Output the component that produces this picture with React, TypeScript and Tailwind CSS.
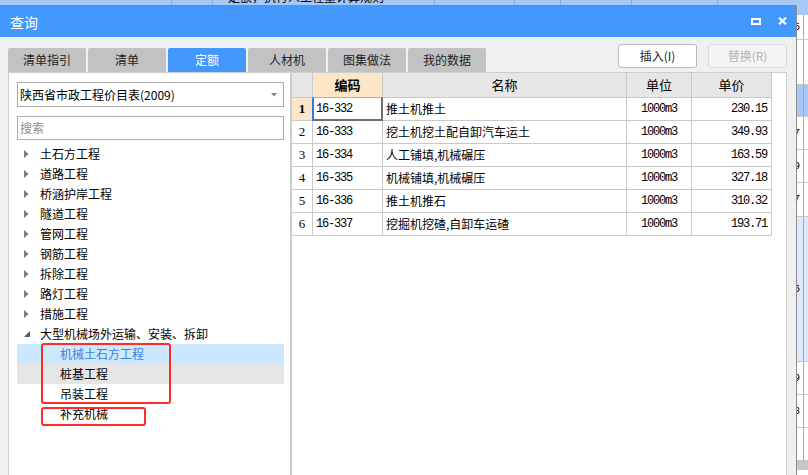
import React from "react";

type BgRowProps = { h: string; bg: string; digit?: string; line?: boolean };

function BgRow({ h, bg, digit, line = true }: BgRowProps) {
  return (
    <div className={`flex shrink-0 ${h} ${bg} ${line ? "border-b border-[#c8c8c8]" : ""}`}>
      <div className="w-[790px] shrink-0" />
      <div className="w-[14px] shrink-0 border-r border-[#a8a8a8] flex items-center justify-end pr-[3px] whitespace-nowrap">
        {digit}
      </div>
      <div className="flex-1" />
    </div>
  );
}

const topItems = [
  "土石方工程",
  "道路工程",
  "桥涵护岸工程",
  "隧道工程",
  "管网工程",
  "钢筋工程",
  "拆除工程",
  "路灯工程",
  "措施工程",
];

const rows = [
  { code: "16-332", name: "推土机推土", unit: "1000m3", price: "230.15" },
  { code: "16-333", name: "挖土机挖土配自卸汽车运土", unit: "1000m3", price: "349.93" },
  { code: "16-334", name: "人工铺填,机械碾压", unit: "1000m3", price: "163.59" },
  { code: "16-335", name: "机械铺填,机械碾压", unit: "1000m3", price: "327.18" },
  { code: "16-336", name: "推土机推石", unit: "1000m3", price: "310.32" },
  { code: "16-337", name: "挖掘机挖碴,自卸车运碴", unit: "1000m3", price: "193.71" },
];

const tabs = ["清单指引", "清单", "定额", "人材机", "图集做法", "我的数据"];

function Collapsed() {
  return (
    <svg width="5" height="8" viewBox="0 0 5 8">
      <polygon points="0,0 4.5,4 0,8" fill="#7d7d7d" />
    </svg>
  );
}

function Expanded() {
  return (
    <svg width="6" height="6" viewBox="0 0 6 6">
      <polygon points="6,0 6,6 0,6" fill="#595959" />
    </svg>
  );
}

export default function App() {
  return (
    <div className="relative w-[808px] h-[475px] overflow-hidden bg-white">
      {/* background application under the dialog */}
      <div className="absolute inset-0 flex flex-col font-['Liberation_Mono',monospace] text-[11px] text-black">
        <div className="h-[15px] shrink-0 bg-[#a6c8f7] flex overflow-hidden">
          <div className="w-[172px] shrink-0 border-r border-[#8aaee0]" />
          <div className="w-[41px] shrink-0 border-r border-[#8aaee0]" />
          <div className="w-[222px] shrink-0 border-r border-[#8aaee0] pl-[15px] whitespace-nowrap font-['Noto_Sans_CJK_SC',sans-serif] text-[12px] leading-[14px] -mt-[10px]">
            定额，执行人工程量计算规则
          </div>
          <div className="w-[80px] shrink-0 border-r border-[#8aaee0]" />
          <div className="w-[46px] shrink-0 border-r border-[#8aaee0]" />
          <div className="w-[71px] shrink-0 border-r border-[#8aaee0]" />
          <div className="w-[86px] shrink-0 border-r border-[#8aaee0] pl-[3px] whitespace-nowrap leading-[14px] -mt-[10px]">
            1.88*16.6+
          </div>
          <div className="flex-1" />
        </div>
        <BgRow h="h-[25px]" bg="bg-white" digit="5" />
        <BgRow h="h-[45px]" bg="bg-white" />
        <BgRow h="h-[32px]" bg="bg-[#a6c8f7]" />
        <BgRow h="h-[33px]" bg="bg-white" digit="7" />
        <BgRow h="h-[33px]" bg="bg-white" digit="9" />
        <BgRow h="h-[34px]" bg="bg-white" digit="7" />
        <BgRow h="h-[145px]" bg="bg-[#dce9fb]" digit="6" />
        <BgRow h="h-[33px]" bg="bg-white" digit="9" />
        <BgRow h="h-[33px]" bg="bg-white" digit="8" />
        <BgRow h="h-[32px]" bg="bg-white" line={false} />
        <div className="h-[10px] shrink-0 bg-[#c6c6c6]" />
        <div className="flex-1 bg-white" />
      </div>

      {/* dialog window */}
      <div className="absolute left-0 top-[5px] w-[797px] h-[480px] flex flex-col bg-[#f0f0f0] border-r border-[#8e8e8e] font-['Noto_Sans_CJK_SC',sans-serif] text-[12px] text-black">
        {/* title bar */}
        <div className="h-[32px] shrink-0 bg-[#4398fd] flex items-center pl-[10px] pr-[9px] text-white">
          <span className="text-[14px] leading-none mt-[2px]">查询</span>
          <div className="ml-auto flex items-center gap-[17px]">
            <div className="w-[10px] h-[7px] border-2 border-white" />
            <svg width="9" height="8" viewBox="0 0 9 8">
              <path d="M1 0.8 L8 7.2 M8 0.8 L1 7.2" stroke="white" strokeWidth="2.2" />
            </svg>
          </div>
        </div>

        {/* tabs + buttons */}
        <div className="flex items-end pt-[7px] pl-[8px] pr-[9px] shrink-0">
          <div className="flex gap-[2px]">
            {tabs.map((t) => (
              <div
                key={t}
                className={`w-[78px] h-[24px] rounded-t-[2px] flex items-center justify-center ${
                  t === "定额" ? "bg-[#4398fd] text-white" : "bg-[#c2c2c2] text-[#222]"
                }`}
              >
                {t}
              </div>
            ))}
          </div>
          <div className="ml-auto flex gap-[11px] mb-[4px]">
            <div className="w-[79px] h-[24px] bg-white border border-[#b9b9b9] rounded-[3px] flex items-center justify-center text-[#222]">
              插入(I)
            </div>
            <div className="w-[79px] h-[24px] bg-[#f4f4f4] border border-[#dadada] rounded-[3px] flex items-center justify-center text-[#b4b4b4]">
              替换(R)
            </div>
          </div>
        </div>

        {/* panels */}
        <div className="flex flex-1 min-h-0 pl-[8px] pr-[9px]">
          {/* left panel */}
          <div className="w-[283px] shrink-0 bg-white border border-[#cdcdcd] flex flex-col pl-[8px] pr-[6px] pt-[9px]">
            <div className="h-[25px] shrink-0 border border-[#adadad] bg-white flex items-center pl-[2px] pr-[6px]">
              <span>陕西省市政工程价目表(2009)</span>
              <svg className="ml-auto" width="6" height="4" viewBox="0 0 6 4">
                <polygon points="0,0 6,0 3,3.5" fill="#858585" />
              </svg>
            </div>
            <div className="h-[24px] mt-[9px] shrink-0 border border-[#adadad] bg-white flex items-center pl-[2px] text-[#8c8c8c]">
              搜索
            </div>
            <div className="relative mt-[4px]">
              {topItems.map((t) => (
                <div key={t} className="h-[20px] flex items-center">
                  <div className="w-[7px] shrink-0" />
                  <div className="w-[16px] shrink-0 flex items-center">
                    <Collapsed />
                  </div>
                  <span>{t}</span>
                </div>
              ))}
              <div className="h-[20px] flex items-center">
                <div className="w-[7px] shrink-0" />
                <div className="w-[16px] shrink-0 flex items-center">
                  <Expanded />
                </div>
                <span>大型机械场外运输、安装、拆卸</span>
              </div>
              <div className="h-[20px] flex items-center pl-[43px] bg-[#cce8ff] text-[#3f7fdc]">机械土石方工程</div>
              <div className="h-[20px] flex items-center pl-[43px] bg-[#e5e5e5]">桩基工程</div>
              <div className="h-[20px] flex items-center pl-[43px]">吊装工程</div>
              <div className="h-[20px] flex items-center pl-[43px]">补充机械</div>

              {/* red annotation boxes */}
              <div className="absolute left-[24px] top-[199px] w-[130px] h-[61px] border-2 border-[#ff2a2a] rounded-[3px]" />
              <div className="absolute left-[24px] top-[263px] w-[105px] h-[19px] border-2 border-[#ff2a2a] rounded-[3px]" />
            </div>
          </div>

          {/* right panel */}
          <div className="flex-1 bg-white border border-[#cdcdcd]">
            <div className="grid grid-cols-[21px_70px_244px_65px_80px] h-[25px] text-[13px]">
              <div className="bg-[#e6e6e6] border-r border-b border-[#c9c9c9]" />
              <div className="bg-[#fde6c8] border-r border-b border-[#c9c9c9] flex items-center justify-center font-bold">
                编码
              </div>
              <div className="bg-[#e6e6e6] border-r border-b border-[#c9c9c9] flex items-center justify-center">名称</div>
              <div className="bg-[#e6e6e6] border-r border-b border-[#c9c9c9] flex items-center justify-center">单位</div>
              <div className="bg-[#e6e6e6] border-r border-b border-[#c9c9c9] flex items-center justify-center">单价</div>
            </div>
            {rows.map((r, i) => (
              <div key={r.code} className="grid grid-cols-[21px_70px_244px_65px_80px] h-[23px]">
                <div
                  className={`border-r border-b border-[#c9c9c9] flex items-center justify-center font-['Liberation_Serif',serif] text-[13px] ${
                    i === 0 ? "bg-[#fde6c8] font-bold" : "bg-white"
                  }`}
                >
                  {i + 1}
                </div>
                <div className="relative border-r border-b border-[#c9c9c9] flex items-center pl-[3px] font-['Liberation_Mono',monospace] text-[12px] tracking-[-1.2px]">
                  {r.code}
                  {i === 0 && (
                    <div className="absolute -left-px -top-px -right-px -bottom-px border-t border-l-2 border-r-2 border-b-2 border-t-[#8fb4e6] border-l-[#2a7de1] border-r-[#6e6e6e] border-b-[#6e6e6e]" />
                  )}
                </div>
                <div className="border-r border-b border-[#c9c9c9] flex items-center pl-[3px]">{r.name}</div>
                <div className="border-r border-b border-[#c9c9c9] flex items-center justify-center font-['Liberation_Mono',monospace] text-[12px] tracking-[-1.2px]">
                  {r.unit}
                </div>
                <div className="border-r border-b border-[#c9c9c9] flex items-center justify-end pr-[4px] font-['Liberation_Mono',monospace] text-[12px] tracking-[-1.2px]">
                  {r.price}
                </div>
              </div>
            ))}
          </div>
        </div>
      </div>
    </div>
  );
}
